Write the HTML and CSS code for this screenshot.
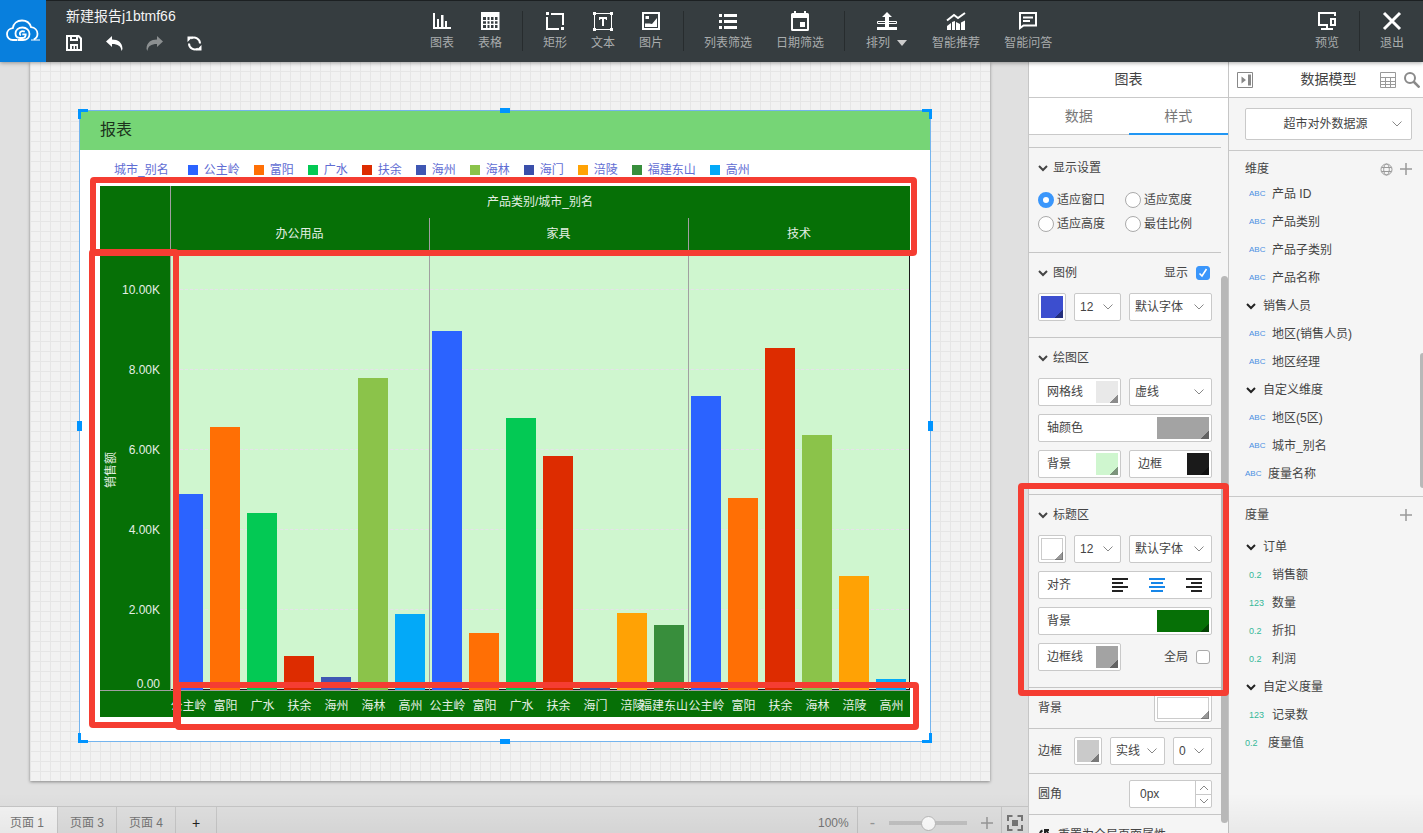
FILE: index.html
```html
<!DOCTYPE html>
<html lang="zh-CN">
  <head>
    <meta charset="UTF-8" />
    <meta name="viewport" content="width=device-width, initial-scale=1.0" />
    <title>新建报告j1btmf66</title>
    <link rel="stylesheet" href="styles.css" />
  </head>
  <body>
    <svg class="defs" width="0" height="0" aria-hidden="true">
      <symbol id="i-down" viewBox="0 0 10 10"><path d="M1 3l4 4 4-4" fill="none" stroke="currentColor" stroke-width="2" /></symbol>
      <symbol id="i-plus" viewBox="0 0 12 12"><path d="M6 0v12M0 6h12" fill="none" stroke="currentColor" stroke-width="1.5" /></symbol>
    </svg>
    <div class="app">
      <header class="topbar">
        <a class="logo" href="#" aria-label="首页">
          <svg width="34" height="24" viewBox="0 0 34 24" fill="none" stroke="#fff" stroke-width="1.8">
            <path d="M11.500 21H6.800C3.500 21 1 18.500 1 15.300 1 12 3.400 9.500 6.800 9.200 7.300 4.500 11 1.500 16 1.500c4.600 0 7.800 2.600 9 6.600 3.800.4 6.500 3.200 6.500 6.700 0 2.800-1.400 4.800-3.800 5.700" />
            <path d="M12 21h5c4 0 6.500-2.500 6.500-6 0-3.800-3-6.500-7-6.500S9.500 11 9.500 14.500c0 2.600 1.800 4.500 4.500 4.500h2.500c2 0 3.200-1.200 3.200-3.700h-3.400M18.800 12.600c-2.300-1.200-5-.2-5 2 0 .8.300 1.500 1 1.900" />
            <path d="M25 21h9" stroke-width="1" />
          </svg>
        </a>
        <div class="report">
          <h1>新建报告j1btmf66</h1>
          <div class="actions">
            <button type="button" aria-label="保存">
              <svg width="17" height="17" viewBox="0 0 17 17"><path fill="#fff" fill-rule="evenodd" d="M0 0h13l3 3v13H0zM2 2v12h2V9h8v5h2V4l-2-2v4H4V2zM6 2v2h4V2zM6 11v3h1.500v-3zM9 11v3h1.500v-3z" /></svg>
            </button>
            <button type="button" aria-label="撤销">
              <svg width="17" height="17" viewBox="0 0 17 17"><path fill="#fff" d="M0 6.500L6 1v3.500c6 0 10.500 3 10.500 9.500L15.500 16C15 11 12 9 6 9v3z" /></svg>
            </button>
            <button type="button" aria-label="重做">
              <svg width="17" height="17" viewBox="0 0 17 17"><path fill="#8c9091" d="M17 6.500L11 1v3.500C5 4.500.5 7.500.500 14l1 2C2 11 5 9 11 9v3z" /></svg>
            </button>
            <button type="button" aria-label="刷新">
              <svg width="17" height="17" viewBox="0 0 17 17" fill="none" stroke="#fff" stroke-width="2"><path d="M5 3.300a6 6 0 0 1 9 5.200M12 13.700a6 6 0 0 1-9-5.200" /><path fill="#fff" stroke="none" d="M1.500 1.500h5.500L1.500 7zM15.500 15.500H10L15.500 10z" /></svg>
            </button>
          </div>
        </div>
        <nav class="tools">
          <button type="button" class="tool">
            <svg width="20" height="20" viewBox="0 0 20 20"><path fill="#fff" d="M1 2h2v14h16v2H1zM5 8h2v8H5zM9 4h2.500v12H9zM13 10h2v6h-2z" /></svg>图表
          </button>
          <button type="button" class="tool">
            <svg width="20" height="20" viewBox="0 0 20 20"><path fill="#fff" fill-rule="evenodd" d="M1 1h18.500v18H1zM3 6v3h3V6zM7.500 6v3h2V6zM11 6v3h2.500V6zM15 6v3h2.500V6zM3 10.200v2.500h3v-2.500zM7.500 10.200v2.500h2v-2.500zM11 10.200v2.500h2.500v-2.500zM15 10.200v2.500h2.500v-2.500zM3 14v3h3v-3zM7.500 14v3h2v-3zM11 14v3h2.500v-3zM15 14v3h2.500v-3z" /></svg>表格
          </button>
          <span class="divider"></span>
          <button type="button" class="tool">
            <svg width="20" height="20" viewBox="0 0 20 20"><path fill="#fff" d="M1 1h3v3H1zM6 2h13v12h-2V4H6zM1 6h2v11h11v2H1zM16 16h3v3h-3z" /></svg>矩形
          </button>
          <button type="button" class="tool">
            <svg width="20" height="20" viewBox="0 0 20 20"><path d="M1.500 2.500h17v16h-17z" fill="none" stroke="#fff" /><path fill="#fff" d="M0 1h3v3H0zM17 1h3v3h-3zM0 17h3v3H0zM17 17h3v3h-3zM6 6h8v3h-1.200V8H11v7H9V8H7.200v1H6z" /></svg>文本
          </button>
          <button type="button" class="tool">
            <svg width="20" height="20" viewBox="0 0 20 20"><path fill="#fff" fill-rule="evenodd" d="M1 1h18v18H1zM3 3v14h14V3z" /><path fill="#fff" d="M4.500 5H8v3H4.500zM4 16v-3.500h4.500l2.500 .5L16 7v9z" /></svg>图片
          </button>
          <span class="divider"></span>
          <button type="button" class="tool">
            <svg width="20" height="20" viewBox="0 0 20 20"><path fill="#fff" d="M1 3h3v3H1zM6 3h13v3H6zM1 9h3v3H1zM6 9h13v3H6zM1 15h3v3H1zM6 15h13v3H6z" /></svg>列表筛选
          </button>
          <button type="button" class="tool">
            <svg width="20" height="20" viewBox="0 0 20 20"><path fill="#fff" fill-rule="evenodd" d="M4 0h2v2h8V0h2v2h1.500Q19 2 19 3.500v15q0 1.500-1.500 1.500h-15Q1 20 1 18.500v-15Q1 2 2.500 2H4zM3 7v11h14V7zM10 11h5v5h-5z" /></svg>日期筛选
          </button>
          <span class="divider"></span>
          <button type="button" class="tool tool-menu">
            <svg width="20" height="20" viewBox="0 0 20 20"><path fill="#fff" d="M10 1l5 5h-3v10h8v3H0v-3h8V6H5z" /><path d="M8 10.500H.500v2H8M12 10.500h7.500v2H12" fill="none" stroke="#fff" /></svg>
            <span>排列<i class="caret"></i></span>
          </button>
          <button type="button" class="tool">
            <svg width="20" height="20" viewBox="0 0 20 20"><path d="M1 9.500L8 4l4 3 7-5" fill="none" stroke="#fff" stroke-width="2" /><path fill="#fff" d="M1 15l4-3v7H1zM6 11l3-1v9H6zM10 11l4 2v6h-4zM15 11.500l4-2V19h-4z" /></svg>智能推荐
          </button>
          <button type="button" class="tool">
            <svg width="20" height="20" viewBox="0 0 20 20" fill="none" stroke="#fff" stroke-width="2"><path d="M2 2h16v12.500H5.500L2 17zM5 6.500h10M5 10h7" /></svg>智能问答
          </button>
        </nav>
        <nav class="tools tools-right">
          <button type="button" class="tool">
            <svg width="20" height="20" viewBox="0 0 20 20" fill="none" stroke="#fff" stroke-width="2"><path d="M18 5V2H2v12h9M10 14v4M4 18h12M14 8h4v6h-4z" /></svg>预览
          </button>
          <span class="divider"></span>
          <button type="button" class="tool">
            <svg width="20" height="20" viewBox="0 0 20 20"><path d="M2 2l16 16M18 2L2 18" stroke="#fff" stroke-width="3" /></svg>退出
          </button>
        </nav>
      </header>

      <div class="main">
        <section class="workspace">
          <div class="stage">
            <div class="page">
              <article class="widget">
                <h2>报表</h2>
                <ul class="legend">
                  <li class="legend-title">城市_别名</li>
                  <li><i class="c-blue"></i>公主岭</li>
                  <li><i class="c-orange"></i>富阳</li>
                  <li><i class="c-green"></i>广水</li>
                  <li><i class="c-red"></i>扶余</li>
                  <li><i class="c-indigo"></i>海州</li>
                  <li><i class="c-lime"></i>海林</li>
                  <li><i class="c-navy"></i>海门</li>
                  <li><i class="c-amber"></i>涪陵</li>
                  <li><i class="c-forest"></i>福建东山</li>
                  <li><i class="c-sky"></i>高州</li>
                </ul>
                <div class="chart">
                  <div class="corner"></div>
                  <div class="chart-head">
                    <div class="head-title">产品类别/城市_别名</div>
                    <div class="panels head-cats">
                      <div>办公用品</div>
                      <div>家具</div>
                      <div>技术</div>
                    </div>
                  </div>
                  <div class="y-axis">
                    <span class="y-title">销售额</span>
                    <div class="ticks">
                      <span></span>
                      <span>10.00K</span>
                      <span></span>
                      <span>8.00K</span>
                      <span></span>
                      <span>6.00K</span>
                      <span></span>
                      <span>4.00K</span>
                      <span></span>
                      <span>2.00K</span>
                      <span></span>
                    </div>
                    <span class="zero">0.00</span>
                  </div>
                  <div class="plot">
                    <div class="gridlines"><i></i><i></i><i></i><i></i><i></i></div>
                    <div class="panels bars">
                      <div>
                        <span><b class="c-blue" style="--v: 4900"></b></span>
                        <span><b class="c-orange" style="--v: 6580"></b></span>
                        <span><b class="c-green" style="--v: 4430"></b></span>
                        <span><b class="c-red" style="--v: 850"></b></span>
                        <span><b class="c-indigo" style="--v: 325"></b></span>
                        <span><b class="c-lime" style="--v: 7800"></b></span>
                        <span><b class="c-sky" style="--v: 1900"></b></span>
                      </div>
                      <div>
                        <span><b class="c-blue" style="--v: 8980"></b></span>
                        <span><b class="c-orange" style="--v: 1425"></b></span>
                        <span><b class="c-green" style="--v: 6800"></b></span>
                        <span><b class="c-red" style="--v: 5850"></b></span>
                        <span><b class="c-navy" style="--v: 100"></b></span>
                        <span><b class="c-amber" style="--v: 1925"></b></span>
                        <span><b class="c-forest" style="--v: 1625"></b></span>
                      </div>
                      <div>
                        <span><b class="c-blue" style="--v: 7350"></b></span>
                        <span><b class="c-orange" style="--v: 4800"></b></span>
                        <span><b class="c-red" style="--v: 8550"></b></span>
                        <span><b class="c-lime" style="--v: 6380"></b></span>
                        <span><b class="c-amber" style="--v: 2850"></b></span>
                        <span><b class="c-sky" style="--v: 275"></b></span>
                      </div>
                    </div>
                  </div>
                  <div class="corner corner-bottom"></div>
                  <div class="panels x-axis">
                    <div>
                      <span>公主岭</span><span>富阳</span><span>广水</span><span>扶余</span><span>海州</span><span>海林</span><span>高州</span>
                    </div>
                    <div>
                      <span>公主岭</span><span>富阳</span><span>广水</span><span>扶余</span><span>海门</span><span>涪陵</span><span class="label-end">福建东山</span>
                    </div>
                    <div>
                      <span>公主岭</span><span>富阳</span><span>扶余</span><span>海林</span><span>涪陵</span><span>高州</span>
                    </div>
                  </div>
                </div>
                <i class="handle nw"></i><i class="handle ne"></i><i class="handle sw"></i><i class="handle se"></i>
                <i class="grip n"></i><i class="grip s"></i><i class="grip w"></i><i class="grip e"></i>
                <i class="mark mark-top"></i>
                <i class="mark mark-left"></i>
                <i class="mark mark-bottom"></i>
              </article>
            </div>
          </div>
          <footer class="pagebar">
            <button type="button" class="active">页面 1</button>
            <button type="button">页面 3</button>
            <button type="button">页面 4</button>
            <button type="button" class="add">+</button>
            <span class="percent">100%</span>
            <div class="zoom">
              <button type="button">-</button>
              <input type="range" min="0" max="200" value="100" aria-label="缩放" />
              <button type="button" aria-label="放大"><svg width="12" height="12"><use href="#i-plus" /></svg></button>
            </div>
            <button type="button" class="fit" aria-label="适应">
              <svg width="16" height="16" viewBox="0 0 16 16"><path d="M1 6V1h4.500M10.500 1H15v5M1 10v5h4.500M10.500 15H15v-5" fill="none" stroke="#777" stroke-width="2" /><path fill="#777" d="M5 5h6v6H5z" /></svg>
            </button>
          </footer>
        </section>

        <aside class="style-panel">
          <h2 class="panel-head">图表</h2>
          <div class="tabs">
            <button type="button">数据</button>
            <button type="button" class="active">样式</button>
          </div>
          <div class="settings">
            <section class="group">
              <h3><svg width="10" height="10"><use href="#i-down" /></svg>显示设置</h3>
              <div class="radios">
                <label><input type="radio" name="fit" checked />适应窗口</label>
                <label><input type="radio" name="fit" />适应宽度</label>
                <label><input type="radio" name="fit" />适应高度</label>
                <label><input type="radio" name="fit" />最佳比例</label>
              </div>
            </section>
            <section class="group">
              <h3><svg width="10" height="10"><use href="#i-down" /></svg>图例<label class="check">显示<input type="checkbox" checked /></label></h3>
              <div class="row">
                <div class="pair">
                  <label class="field color"><span class="swatch"><input type="color" value="#3c4ecf" aria-label="图例颜色" /></span></label>
                  <select aria-label="图例字号"><option>12</option></select>
                </div>
                <select aria-label="图例字体"><option>默认字体</option></select>
              </div>
            </section>
            <section class="group">
              <h3><svg width="10" height="10"><use href="#i-down" /></svg>绘图区</h3>
              <div class="row">
                <label class="field">网格线<span class="swatch"><input type="color" value="#e9e9e9" /></span></label>
                <select aria-label="网格线样式"><option>虚线</option></select>
                <label class="field full">轴颜色<span class="swatch wide"><input type="color" value="#a3a3a3" /></span></label>
                <label class="field">背景<span class="swatch"><input type="color" value="#cff6cf" /></span></label>
                <label class="field">边框<span class="swatch"><input type="color" value="#1a1a1a" /></span></label>
              </div>
            </section>
            <section class="group">
              <h3><svg width="10" height="10"><use href="#i-down" /></svg>标题区</h3>
              <div class="row">
                <div class="pair">
                  <label class="field color"><span class="swatch light"><input type="color" value="#ffffff" aria-label="标题颜色" /></span></label>
                  <select aria-label="标题字号"><option>12</option></select>
                </div>
                <select aria-label="标题字体"><option>默认字体</option></select>
                <div class="field full aligns">
                  <span>对齐</span>
                  <button type="button" aria-label="左对齐"><svg width="16" height="14" viewBox="0 0 16 14"><path d="M0 1h16M0 5h11M0 9h16M0 13h11" /></svg></button>
                  <button type="button" class="on" aria-label="居中"><svg width="16" height="14" viewBox="0 0 16 14"><path d="M0 1h16M2 5h12M0 9h16M2 13h12" /></svg></button>
                  <button type="button" aria-label="右对齐"><svg width="16" height="14" viewBox="0 0 16 14"><path d="M0 1h16M5 5h11M0 9h16M5 13h11" /></svg></button>
                </div>
                <label class="field full">背景<span class="swatch wide"><input type="color" value="#067006" /></span></label>
                <label class="field">边框线<span class="swatch"><input type="color" value="#a3a3a3" /></span></label>
                <label class="check">全局<input type="checkbox" /></label>
              </div>
              <i class="mark mark-group"></i>
            </section>
            <label class="line">背景<span class="field color-wide"><span class="swatch light wide"><input type="color" value="#ffffff" /></span></span></label>
            <div class="line tall">
              <span>边框</span>
              <label class="field color"><span class="swatch"><input type="color" value="#cacaca" aria-label="边框颜色" /></span></label>
              <select class="w-style" aria-label="边框样式"><option>实线</option></select>
              <select class="w-num" aria-label="边框宽度"><option>0</option></select>
            </div>
            <div class="line">
              <label for="radius">圆角</label>
              <div class="field stepper">
                <input type="text" id="radius" value="0px" />
                <span class="steps">
                  <button type="button" aria-label="增加"><svg width="10" height="6" viewBox="0 0 10 6"><path d="M1 5l4-4 4 4" /></svg></button>
                  <button type="button" aria-label="减少"><svg width="10" height="6" viewBox="0 0 10 6"><path d="M1 1l4 4 4-4" /></svg></button>
                </span>
              </div>
            </div>
            <a class="line reset" href="#">
              <svg width="12" height="12" viewBox="0 0 12 12" fill="none" stroke="#222" stroke-width="2"><path d="M4.500 1.500C1 3 1 8.500 4 10.500M8 1.500c3 2 3 7 0 9M7 5V1h4" /></svg>重置为全局页面属性
            </a>
            <i class="scrollbar"></i>
          </div>
        </aside>

        <aside class="data-panel">
          <div class="panel-head data-head">
            <button type="button" aria-label="收起"><svg width="16" height="16" viewBox="0 0 16 16"><path d="M.5.500h15v15H.5z" fill="none" stroke="#888" /><path fill="#888" d="M4.500 4.500L9 8l-4.500 3.500zM11 2.500h3v11h-3z" /></svg></button>
            <h2>数据模型</h2>
            <button type="button" aria-label="表格"><svg width="16" height="16" viewBox="0 0 16 16" fill="none" stroke="#999"><path d="M.5.500h15v15H.5zM.5 5.500h15M.5 9.500h15M.5 12.500h15M5.500 5.500v10M10.500 5.500v10" /></svg></button>
            <button type="button" aria-label="搜索"><svg width="16" height="16" viewBox="0 0 16 16" fill="none" stroke="#8a8a8a" stroke-width="2"><circle cx="6" cy="6" r="5" /><path d="M9.500 9.500l6 6" stroke-width="2.500" /></svg></button>
          </div>
          <div class="source">
            <select aria-label="数据源"><option>超市对外数据源</option></select>
          </div>
          <section class="fields">
            <h3>维度
              <span>
                <button type="button" aria-label="地理"><svg width="13" height="13" viewBox="0 0 13 13" fill="none" stroke="#999"><circle cx="6.500" cy="6.500" r="5.500" /><ellipse cx="6.500" cy="6.500" rx="2.800" ry="5.500" /><path d="M1.500 4.500h10M1.500 8.500h10" /></svg></button>
                <button type="button" aria-label="添加维度"><svg width="12" height="12"><use href="#i-plus" /></svg></button>
              </span>
            </h3>
            <ul>
              <li><em>ABC</em>产品 ID</li>
              <li><em>ABC</em>产品类别</li>
              <li><em>ABC</em>产品子类别</li>
              <li><em>ABC</em>产品名称</li>
              <li class="folder"><svg width="10" height="10"><use href="#i-down" /></svg>销售人员</li>
              <li><em>ABC</em>地区(销售人员)</li>
              <li><em>ABC</em>地区经理</li>
              <li class="folder"><svg width="10" height="10"><use href="#i-down" /></svg>自定义维度</li>
              <li><em>ABC</em>地区(5区)</li>
              <li><em>ABC</em>城市_别名</li>
              <li class="root"><em>ABC</em>度量名称</li>
            </ul>
            <i class="scrollbar-thin"></i>
          </section>
          <section class="fields measures">
            <h3>度量
              <span><button type="button" aria-label="添加度量"><svg width="12" height="12"><use href="#i-plus" /></svg></button></span>
            </h3>
            <ul>
              <li class="folder"><svg width="10" height="10"><use href="#i-down" /></svg>订单</li>
              <li><em>0.2</em>销售额</li>
              <li><em>123</em>数量</li>
              <li><em>0.2</em>折扣</li>
              <li><em>0.2</em>利润</li>
              <li class="folder"><svg width="10" height="10"><use href="#i-down" /></svg>自定义度量</li>
              <li><em>123</em>记录数</li>
              <li class="root"><em>0.2</em>度量值</li>
            </ul>
          </section>
        </aside>
      </div>
    </div>
  </body>
</html>
```
FILE: styles.css
```css
* {
  box-sizing: border-box;
}
body {
  margin: 0;
  font-family: "Liberation Sans", "Noto Sans CJK SC", sans-serif;
  font-size: 12px;
  line-height: 20px;
  color: #444;
}
h1,
h2,
h3,
ul {
  margin: 0;
  padding: 0;
  font-weight: inherit;
  list-style: none;
}
h3 {
  font-size: 12px;
}
i,
em {
  font-style: normal;
}
button,
input,
select {
  font: inherit;
  color: inherit;
}
button {
  padding: 0;
  border: none;
  background: none;
  cursor: pointer;
}
svg {
  display: block;
  flex: none;
}
.defs {
  position: absolute;
}
.app {
  display: flex;
  flex-direction: column;
  height: 100vh;
  overflow: hidden;
  position: relative;
}
.app::after {
  content: "";
  position: absolute;
  inset: auto 0 0 0;
  height: 40px;
  background: linear-gradient(transparent, rgba(0, 0, 0, 0.05));
  pointer-events: none;
}

/* top bar */
.topbar {
  display: flex;
  flex: none;
  height: 62px;
  background: #363d40;
  box-shadow: inset 0 1px #1c2022, 0 1px 4px rgba(0, 0, 0, 0.35);
  position: relative;
  z-index: 3;
}
.logo {
  display: flex;
  align-items: center;
  justify-content: center;
  width: 46px;
  background: #087fdd;
}
.report {
  width: 384px;
  padding: 6px 20px 0;
  color: #f4f4f4;
}
.report h1 {
  font-size: 14px;
}
.actions {
  display: flex;
  gap: 23px;
  padding-top: 9px;
}
.tools {
  display: flex;
  gap: 24px;
  padding-top: 11px;
}
.tools-right {
  margin-left: auto;
  padding-right: 19px;
}
.tool {
  display: flex;
  flex-direction: column;
  align-items: center;
  align-self: flex-start;
  gap: 2px;
  color: #a9acad;
  white-space: nowrap;
}
.tool-menu {
  width: 43px;
}
.tool-menu span {
  display: flex;
  align-items: center;
  gap: 7px;
}
.caret {
  border: 5px solid transparent;
  border-top: 6px solid #ccc;
  border-bottom: 0;
}
.divider {
  width: 1px;
  height: 40px;
  margin: 0 -4px;
  background: #272c2e;
}

.main {
  display: flex;
  flex: 1;
  min-height: 0;
}

/* workspace */
.workspace {
  display: flex;
  flex: 1;
  flex-direction: column;
  min-width: 0;
  background: #e0e0e0;
}
.stage {
  display: flex;
  flex: 1;
  min-height: 0;
  padding: 0 38px 25px 30px;
}
.page {
  flex: 1;
  position: relative;
  background-color: #f2f2f2;
  background-image: linear-gradient(#e6e6e6 1px, transparent 1px),
    linear-gradient(90deg, #e6e6e6 1px, transparent 1px);
  background-size: 10px 10px;
  background-position: 0 9px;
  box-shadow: 0 1px 3px rgba(0, 0, 0, 0.4);
}
.widget {
  display: flex;
  flex-direction: column;
  position: absolute;
  inset: 48px 59px 39px 49px;
  padding-bottom: 24px;
  border: 1px solid #74b4ee;
  background: #fff;
}
.widget h2 {
  height: 39px;
  padding-left: 20px;
  font-size: 16px;
  line-height: 38px;
  color: #1c331c;
  background: #76d576;
}
.legend {
  display: flex;
  gap: 14px;
  padding: 10px 34px 6px;
  color: #5f6dd3;
  white-space: nowrap;
}
.legend li {
  display: flex;
  align-items: center;
  gap: 6px;
}
.legend-title {
  margin-right: 5px;
}
.legend i {
  width: 10px;
  height: 10px;
}
.c-blue { background: #2b63ff; }
.c-orange { background: #ff6f05; }
.c-green { background: #03c954; }
.c-red { background: #dd2c00; }
.c-indigo { background: #3f57b3; }
.c-lime { background: #8bc34a; }
.c-navy { background: #3a4faa; }
.c-amber { background: #ffa205; }
.c-forest { background: #388e3c; }
.c-sky { background: #03a9f8; }

.chart {
  display: grid;
  flex: 1;
  grid-template-columns: 70px 1fr;
  grid-template-rows: 64px 1fr 27px;
  min-height: 0;
  margin: 0 20px;
  color: #e4efe4;
}
.corner,
.chart-head,
.y-axis,
.x-axis {
  background: #067006;
}
.corner-bottom,
.x-axis {
  border-top: 1px solid #a0a0a0;
}
.chart-head {
  display: grid;
  grid-template-rows: 32px 32px;
  text-align: center;
  line-height: 32px;
  box-shadow: inset 1px 0 #a0a0a0;
}
.panels {
  display: grid;
  grid-template-columns: 7fr 7fr 6fr;
}
.head-cats div,
.bars > div {
  box-shadow: inset 1px 0 #a0a0a0;
}
.y-axis {
  position: relative;
}
.y-title {
  position: absolute;
  top: 0;
  bottom: 0;
  left: 1px;
  text-align: center;
  writing-mode: vertical-rl;
  text-orientation: sideways;
  transform: rotate(180deg);
}
.ticks {
  display: grid;
  grid-template-rows: repeat(11, 1fr);
  height: 100%;
  padding-right: 10px;
  text-align: right;
}
.ticks span {
  height: 20px;
  margin-top: -10px;
}
.zero {
  position: absolute;
  right: 10px;
  bottom: -4px;
}
.plot {
  display: grid;
  background: #cff6cf;
  box-shadow: inset -1px -1px #1a1a1a;
}
.gridlines,
.bars {
  grid-area: 1 / 1;
}
.gridlines {
  display: grid;
  grid-template-rows: 1fr repeat(5, 2fr);
  margin-right: 1px;
}
.gridlines i {
  border-bottom: 1px dashed #e6e2ea;
}
.bars {
  position: relative;
}
.bars > div,
.x-axis > div {
  display: flex;
}
.bars > div {
  padding-right: 1px;
}
.bars span {
  display: flex;
  flex: 1;
  align-items: flex-end;
  justify-content: center;
}
.bars b {
  width: 30px;
  height: calc(var(--v) / 11000 * 100%);
}
.x-axis span {
  display: flex;
  flex: 1;
  justify-content: center;
  width: 0;
  line-height: 30px;
  white-space: nowrap;
}
.x-axis .label-end {
  justify-content: flex-end;
}

/* selection handles */
.handle {
  position: absolute;
  width: 10px;
  height: 10px;
  border: 0 solid #0094ff;
}
.nw { top: -2px; left: -2px; border-width: 3px 0 0 3px; }
.ne { top: -2px; right: -2px; border-width: 3px 3px 0 0; }
.sw { bottom: -2px; left: -2px; border-width: 0 0 3px 3px; }
.se { bottom: -2px; right: -2px; border-width: 0 3px 3px 0; }
.grip {
  position: absolute;
  background: #0094ff;
}
.n,
.s {
  left: 420px;
  width: 10px;
  height: 5px;
}
.w,
.e {
  top: 310px;
  width: 5px;
  height: 10px;
}
.n { top: -3px; }
.s { bottom: -3px; }
.w { left: -3px; }
.e { right: -3px; }

/* red callouts */
.mark {
  position: absolute;
  z-index: 2;
  border: 6px solid #f53d32;
  border-radius: 4px;
  pointer-events: none;
}
.mark-top { top: 66px; left: 10px; right: 13px; height: 79px; }
.mark-left { top: 138px; bottom: 13px; left: 9px; width: 90px; }
.mark-bottom { bottom: 11px; left: 95px; right: 11px; height: 48px; }
.mark-group { inset: -12px -8px -9px -11px; }

/* page bar */
.pagebar {
  display: flex;
  flex: none;
  height: 27px;
  border-top: 1px solid #c6c6c6;
  color: #777;
  line-height: 32px;
  overflow: hidden;
}
.pagebar > button {
  height: 32px;
  padding: 0 12px;
  border-right: 1px solid #c9c9c9;
}
.pagebar .active {
  padding: 0 13px 0 10px;
  background: #f4f4f4;
}
.pagebar .add {
  width: 41px;
  font-size: 14px;
  color: #222;
}
.percent {
  margin-left: auto;
  padding-right: 8px;
}
.zoom {
  display: flex;
  align-items: center;
  gap: 14px;
  height: 32px;
  padding: 0 8px 0 12px;
  border-left: 1px solid #c6c6c6;
  border-right: 1px solid #c6c6c6;
  color: #999;
}
.zoom button {
  font-size: 16px;
}
.zoom input {
  width: 78px;
  height: 16px;
  margin: 0;
  appearance: none;
  background: linear-gradient(#c4c4c4, #c4c4c4) center / 100% 4px no-repeat;
}
.zoom input::-webkit-slider-thumb {
  appearance: none;
  width: 15px;
  height: 15px;
  border: 1px solid #bbb;
  border-radius: 50%;
  background: #fff;
}
.pagebar .fit {
  padding: 0 5px;
  border: none;
}

/* style panel */
.style-panel,
.data-panel {
  flex: none;
  background: #f5f5f5;
  border-left: 1px solid #c6c6c6;
}
.style-panel {
  width: 200px;
  position: relative;
  z-index: 2;
}
.panel-head {
  height: 36px;
  border-bottom: 1px solid #c9c9c9;
  background: #fff;
  font-size: 14px;
  line-height: 35px;
  text-align: center;
}
.tabs {
  display: flex;
  height: 37px;
  margin-bottom: 12px;
  background: #fff;
  font-size: 14px;
  color: #777;
}
.tabs button {
  flex: 1;
  border-bottom: 1px solid #c9c9c9;
}
.tabs .active {
  border-bottom: 2px solid #2196f3;
}
.settings {
  position: relative;
  padding-right: 7px;
}
.group {
  position: relative;
  padding: 10px 9px 16px;
  border-top: 1px solid #c6c6c6;
}
.group h3 {
  display: flex;
  align-items: center;
  gap: 5px;
  margin-bottom: 10px;
}
.radios {
  display: grid;
  grid-template-columns: 87px 1fr;
  grid-auto-rows: 24px;
}
.radios label {
  display: flex;
  align-items: center;
  gap: 3px;
  white-space: nowrap;
}
.radios input,
.check input {
  flex: none;
  margin: 0;
  appearance: none;
  border: 1px solid #aaa;
  background: #fff;
}
.radios input {
  width: 16px;
  height: 16px;
  border-radius: 50%;
}
.radios input:checked {
  border: 5px solid #3a96fb;
}
.check {
  display: flex;
  align-items: center;
  justify-content: flex-end;
  gap: 8px;
  padding-right: 2px;
}
h3 .check {
  margin-left: auto;
}
.check input {
  width: 14px;
  height: 14px;
  border-radius: 3px;
}
.check input:checked {
  border-color: #3a96fb;
  background: #3a96fb url("data:image/svg+xml,%3Csvg xmlns='http://www.w3.org/2000/svg' viewBox='0 0 12 12'%3E%3Cpath d='M2.500 6.500L5 9l4.500-7' fill='none' stroke='white' stroke-width='1.600'/%3E%3C/svg%3E");
}
.row {
  display: grid;
  grid-template-columns: 1fr 1fr;
  gap: 8px;
}
.full {
  grid-column: 1 / -1;
}
.pair {
  display: flex;
  gap: 8px;
}
.pair select {
  flex: 1;
}
.field,
select {
  min-width: 0;
  height: 28px;
  border: 1px solid #c9c9c9;
  border-radius: 2px;
  background: #fff;
}
.field {
  display: flex;
  align-items: center;
  justify-content: space-between;
  padding: 0 2px 0 8px;
}
.color,
.color-wide {
  flex: none;
  padding: 0 2px;
}
select {
  padding: 0 16px 0 5px;
  appearance: none;
  background: #fff url("data:image/svg+xml,%3Csvg xmlns='http://www.w3.org/2000/svg' width='10' height='6'%3E%3Cpath d='M.5.500L5 5 9.500.500' fill='none' stroke='%23888'/%3E%3C/svg%3E") right 7px center no-repeat;
}
.swatch {
  display: flex;
  width: 22px;
  height: 22px;
  position: relative;
}
.wide {
  width: 52px;
}
.swatch::after {
  content: "";
  position: absolute;
  right: 0;
  bottom: 0;
  width: 8px;
  height: 8px;
  background: linear-gradient(135deg, transparent 50%, rgba(0, 0, 0, 0.4) 50%);
}
.swatch input {
  width: 100%;
  height: 100%;
  padding: 0;
  border: none;
  background: none;
  appearance: none;
}
.light input {
  border: 1px solid #ccc;
}
.swatch input::-webkit-color-swatch-wrapper {
  padding: 0;
}
.swatch input::-webkit-color-swatch {
  border: none;
  border-radius: 0;
}
.aligns {
  gap: 21px;
  padding-right: 9px;
}
.aligns span {
  margin-right: auto;
}
.aligns path {
  stroke: #222;
  stroke-width: 2;
}
.aligns .on path {
  stroke: #1786e8;
}
.line {
  display: flex;
  align-items: center;
  gap: 8px;
  height: 41px;
  padding: 0 9px;
  border-top: 1px solid #c6c6c6;
}
.line.tall {
  height: 45px;
}
.line > :first-child {
  margin-right: auto;
}
.line > .color-wide {
  margin-left: auto;
  margin-right: 0;
}
.w-style {
  width: 55px;
}
.w-num {
  width: 39px;
}
.stepper {
  width: 83px;
  padding: 0;
}
.stepper input {
  width: 65px;
  padding: 0 10px;
  border: none;
  background: none;
  outline: none;
}
.steps {
  display: grid;
  grid-template-rows: 1fr 1fr;
  width: 16px;
  height: 26px;
  border-left: 1px solid #c9c9c9;
}
.steps button {
  display: flex;
  align-items: center;
  justify-content: center;
}
.steps button + button {
  border-top: 1px solid #c9c9c9;
}
.steps path {
  fill: none;
  stroke: #888;
}
.reset {
  color: inherit;
  text-decoration: none;
}
.line.reset > :first-child {
  margin-right: 0;
}
.scrollbar {
  position: absolute;
  top: 129px;
  right: 0;
  width: 7px;
  height: 547px;
  border-radius: 4px;
  background: #b8b8b8;
}

/* data panel */
.data-panel {
  width: 195px;
}
.data-head {
  display: flex;
  align-items: center;
  gap: 8px;
  padding: 0 3px 0 8px;
}
.data-head h2 {
  flex: 1;
  padding-left: 24px;
  font-size: 14px;
}
.source {
  padding: 10px 11px 10px 16px;
  border-bottom: 1px solid #c9c9c9;
}
.source select {
  width: 100%;
  height: 32px;
  padding: 0 28px 0 22px;
  background-position: right 9px center;
  text-align: center;
  text-align-last: center;
}
.fields {
  position: relative;
  padding: 8px 0;
}
.fields ul {
  padding-top: 1px;
}
.measures {
  border-top: 1px solid #c9c9c9;
}
.measures h3 {
  margin-bottom: 7px;
}
.fields h3,
.fields h3 span {
  display: flex;
  align-items: center;
  gap: 7px;
}
.fields h3 {
  justify-content: space-between;
  padding: 0 11px 0 16px;
}
.fields h3 button {
  color: #999;
}
.fields li {
  display: flex;
  align-items: center;
  height: 28px;
  padding-left: 20px;
}
.fields .folder {
  gap: 7px;
  padding-left: 17px;
}
.fields .root {
  padding-left: 16px;
}
.fields em {
  width: 23px;
  font-size: 8px;
  color: #4a90e2;
}
.measures em {
  font-size: 9px;
  color: #35b898;
}
.folder svg {
  color: #222;
}
.scrollbar-thin {
  position: absolute;
  top: 202px;
  right: 0;
  width: 3px;
  height: 135px;
  border-radius: 3px 0 0 3px;
  background: #b8b8b8;
}
```
